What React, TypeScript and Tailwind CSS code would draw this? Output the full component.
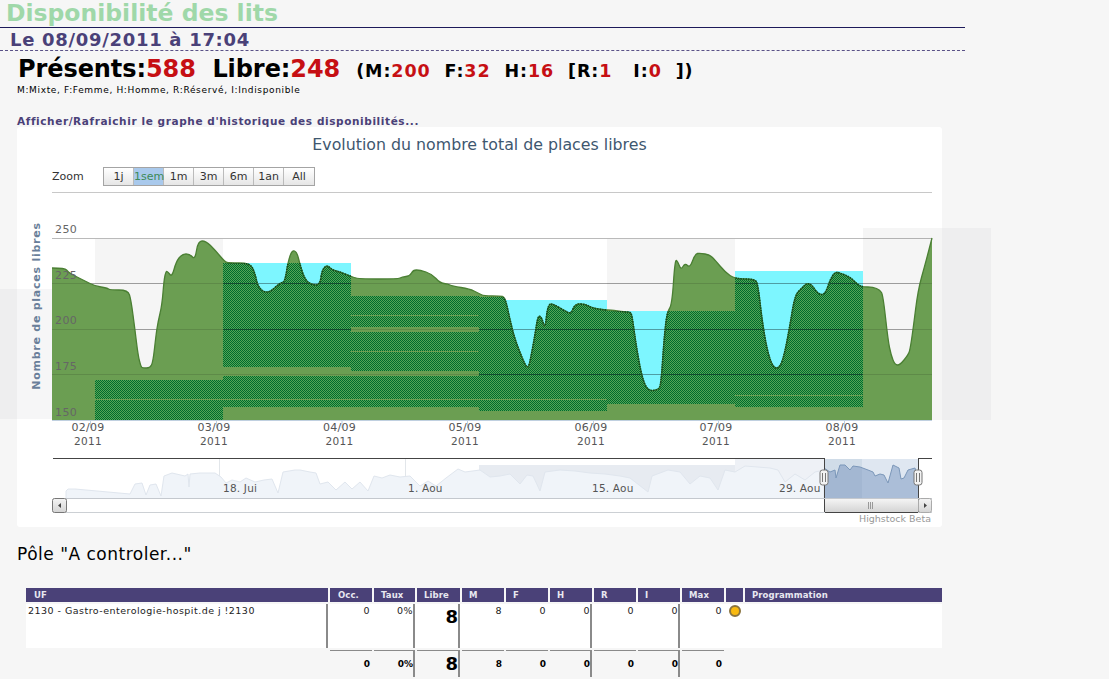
const S: number[][] = [[52,268],[65,268],[68,272],[75,276],[85,281],[95,286],[107,288],[110,290],[128,290],[131,300],[135,330],[138,355],[141,367],[143,368],[150,368],[153,362],[156,335],[158,322],[162,305],[164,280],[166,271],[168,272],[172,277],[176,262],[182,254],[190,254],[195,260],[198,241],[206,241],[215,250],[225,262],[229,263],[250,263],[255,273],[258,288],[268,294],[280,283],[285,282],[288,262],[292,250],[297,252],[300,265],[305,280],[312,285],[320,285],[322,270],[327,265],[332,270],[340,272],[350,276],[358,279],[398,279],[402,277],[410,276],[413,270],[420,270],[432,274],[440,283],[448,284],[452,286],[470,289],[478,293],[484,296],[500,296],[505,297],[510,320],[515,340],[525,365],[528,368],[530,362],[535,335],[538,315],[542,318],[545,330],[548,303],[555,305],[565,311],[571,314],[575,304],[585,304],[592,308],[605,310],[610,310],[625,312],[630,312],[632,315],[636,345],[642,378],[648,391],[658,390],[661,385],[664,340],[667,312],[672,305],[675,259],[678,262],[681,270],[685,263],[690,268],[695,254],[700,253],[710,255],[715,260],[725,272],[735,279],[755,279],[758,285],[762,320],[767,350],[773,368],[780,368],[785,352],[790,325],[795,295],[802,288],[807,283],[812,285],[818,294],[825,295],[830,280],[835,272],[840,273],[850,277],[858,285],[863,287],[873,287],[880,290],[883,295],[888,340],[891,355],[895,365],[900,365],[908,355],[910,350],[913,330],[918,290],[925,265],[932,238]];

const MINI_A: number[][] = [[66,498],[66,491],[68,489],[75,489],[130,494],[135,484],[142,483],[146,495],[150,485],[156,484],[161,496],[164,476],[172,473],[185,476],[188,474],[189,487],[190,474],[200,473],[215,473],[221,477],[226,483],[232,480],[240,482],[246,478],[255,482],[264,480],[272,479],[278,493],[283,472],[295,470],[300,470],[310,472],[316,473],[320,484],[328,482],[336,490],[345,482],[352,489],[360,482],[368,491],[374,476],[382,478],[390,475],[400,477],[410,476],[420,486],[428,481],[436,486],[446,478],[458,469],[465,472],[480,470],[490,477],[500,476],[510,474],[520,484],[527,475],[533,476],[540,491],[545,472],[560,470],[575,471],[590,473],[605,474],[620,476],[630,478],[648,492],[652,476],[668,470],[680,472],[690,484],[700,476],[710,478],[718,490],[725,470],[735,472],[745,466],[770,468],[778,470],[785,482],[795,474],[805,480],[815,472],[824,470],[824,498]];
const MINI_B: number[][] = [[824,468],[830,472],[835,470],[836,478],[840,465],[845,465],[850,470],[853,466],[860,467],[868,470],[873,472],[875,476],[880,474],[884,475],[888,483],[893,465],[899,468],[901,479],[904,478],[908,470],[915,468],[918,480]];

function smooth(p: number[][]) {
  let d = `M${p[0][0]},${p[0][1]}`;
  for (let i = 1; i < p.length - 1; i++) {
    const mx = (p[i][0] + p[i + 1][0]) / 2;
    const my = (p[i][1] + p[i + 1][1]) / 2;
    d += ` Q${p[i][0]},${p[i][1]} ${mx},${my}`;
  }
  d += ` L${p[p.length - 1][0]},${p[p.length - 1][1]}`;
  return d;
}
const poly = (p: number[][]) => "M" + p.map((q) => q.join(",")).join(" L");

const LINE = smooth(S);
const AREA = `${LINE} L932,420 L52,420 Z`;

const DAYS = [
  { x: 95, w: 128, y: 380, h: 40 },
  { x: 223, w: 128, y: 263, h: 104 },
  { x: 223, w: 128, y: 376, h: 31 },
  { x: 351, w: 128, y: 296, h: 31 },
  { x: 351, w: 128, y: 332, h: 39 },
  { x: 351, w: 128, y: 376, h: 31 },
  { x: 479, w: 128, y: 297, h: 114 },
  { x: 607, w: 128, y: 311, h: 93 },
  { x: 735, w: 128, y: 271, h: 136 },
];

const CYAN = [
  { x: 223, w: 128, y: 263, h: 40 },
  { x: 479, w: 128, y: 300, h: 80 },
  { x: 607, w: 128, y: 311, h: 85 },
  { x: 735, w: 128, y: 271, h: 100 },
];

const TICKS = [
  ["02/09", 88],
  ["03/09", 214],
  ["04/09", 339.5],
  ["05/09", 465],
  ["06/09", 591],
  ["07/09", 716],
  ["08/09", 842],
] as const;

const RANGES = ["1j", "1sem", "1m", "3m", "6m", "1an", "All"];
const COLS = ["UF", "Occ.", "Taux", "Libre", "M", "F", "H", "R", "I", "Max", "", "Programmation"];
const ROW = ["2130 - Gastro-enterologie-hospit.de j !2130", "0", "0%", "8", "8", "0", "0", "0", "0", "0"];
const TOTAL = ["", "0", "0%", "8", "8", "0", "0", "0", "0", "0"];
const DIVIDED = [0, 2, 3, 6, 8];
const GRID = "grid grid-cols-[302px_42px_41px_43px_42px_42px_42px_42px_42px_42px_17px_197px] gap-x-[2px]";

function Chart() {
  return (
    <svg viewBox="17 193 925 334" width={925} height={334} className="block overflow-visible" fontFamily="'DejaVu Sans', sans-serif">
      <defs>
        <pattern id="hatch" width="2" height="2" patternUnits="userSpaceOnUse">
          <rect width="2" height="2" fill="#55a555" />
          <rect width="1" height="1" fill="#006a2e" />
          <rect x="1" y="1" width="1" height="1" fill="#006a2e" />
        </pattern>
        <clipPath id="under">
          <path d={AREA} />
        </clipPath>
        <clipPath id="days">
          {DAYS.map((d) => (
            <rect key={`${d.x}-${d.y}`} x={d.x} y={d.y} width={d.w} height={d.h} />
          ))}
        </clipPath>
        <linearGradient id="thumb" x1="0" x2="0" y1="0" y2="1">
          <stop offset="0" stopColor="#f4f4f4" />
          <stop offset="1" stopColor="#d4d4d4" />
        </linearGradient>
      </defs>

      <rect x="0" y="289" width="17" height="130" fill="#eeeeef" />
      <rect x="17" y="289" width="35" height="130" fill="#f6f6f7" />
      <rect x="95" y="239" width="128" height="181" fill="#f5f5f5" />
      <rect x="607" y="239" width="128" height="181" fill="#f5f5f5" />
      <rect x="863" y="228" width="79" height="192" fill="#f5f5f5" />
      <rect x="942" y="228" width="49" height="192" fill="#eeeeef" />

      {CYAN.map((c) => (
        <rect key={c.x} x={c.x} y={c.y} width={c.w} height={c.h} fill="#7df6ff" />
      ))}

      {[238, 283, 329, 374].map((y) => (
        <rect key={y} x="52" y={y} width="880" height="1" fill="#000" fillOpacity="0.27" />
      ))}

      <path d={AREA} fill="#6b9e52" />
      {[283, 329, 374].map((y) => (
        <rect key={y} x="52" y={y} width="880" height="1" fill="#000" fillOpacity="0.12" />
      ))}
      <g clipPath="url(#under)" shapeRendering="crispEdges">
        {DAYS.map((d) => (
          <rect key={`${d.x}-${d.y}`} x={d.x} y={d.y} width={d.w} height={d.h} fill="url(#hatch)" />
        ))}
        <rect x="95" y="399" width="256" height="1" fill="#6b9e52" />
        <rect x="351" y="315" width="128" height="1" fill="#6b9e52" />
        <rect x="351" y="351" width="128" height="1" fill="#6b9e52" />
        <rect x="351" y="399" width="256" height="1" fill="#6b9e52" />
        <rect x="479" y="399" width="128" height="1" fill="#6b9e52" />
        <rect x="735" y="395" width="128" height="1" fill="#6b9e52" />
        <g clipPath="url(#days)">
          {[283, 329, 374].map((y) => (
            <rect key={y} x="52" y={y} width="880" height="1" fill="#0b3a2a" fillOpacity="0.75" />
          ))}
        </g>
      </g>
      <path d={LINE} fill="none" stroke="#4a7f33" strokeWidth="1.3" />
      <g clipPath="url(#days)">
        <path d={LINE} fill="none" stroke="#0a4a20" strokeWidth="1.6" strokeDasharray="1.5 1" />
      </g>

      <rect x="52" y="420" width="880" height="1" fill="#c0d0e0" />

      <g fontSize="11" fill="#666" letterSpacing="0.4">
        {[["250", 233], ["225", 279], ["200", 324], ["175", 370], ["150", 416]].map(([t, y]) => (
          <text key={t} x="55" y={y}>{t}</text>
        ))}
      </g>
      <text transform="translate(40 306) rotate(-90)" textAnchor="middle" fontSize="11" fontWeight="700" fill="#6a7f9a" letterSpacing="0.75">
        Nombre de places libres
      </text>

      {TICKS.map(([t, x]) => (
        <g key={t}>
          <rect x={x + 2} y="420" width="1" height="8" fill="#c0d0e0" />
          <text x={x} y="431" textAnchor="middle" fontSize="11" fill="#555" letterSpacing="0.3">{t}</text>
          <text x={x} y="445" textAnchor="middle" fontSize="10.5" fill="#555" letterSpacing="0.3">2011</text>
        </g>
      ))}

      <rect x="479" y="465" width="256" height="33" fill="#e7ebf1" />
      <rect x="735" y="459" width="89" height="39" fill="#eef1f6" />
      <rect x="824" y="459" width="94" height="39" fill="#dfe7f1" />
      <rect x="219" y="459" width="1" height="39" fill="#e2e6ea" />
      <rect x="405" y="459" width="1" height="39" fill="#e2e6ea" />
      <path d={poly(MINI_A)} fill="#f0f4f9" stroke="#e0e6ee" strokeWidth="1" />
      <path d={`${poly(MINI_B)} L918,498 L824,498 Z`} fill="#abbed8" />
      <rect x="824" y="459" width="38" height="39" fill="#6d8aab" fillOpacity="0.12" />
      <path d={poly(MINI_B)} fill="none" stroke="#7b97b9" strokeWidth="1" />
      <g fontSize="10.5" fill="#555" letterSpacing="0.2">
        <text x="223" y="492">18. Jui</text>
        <text x="408" y="492">1. Aou</text>
        <text x="592" y="492">15. Aou</text>
        <text x="779" y="492">29. Aou</text>
      </g>

      <g shapeRendering="crispEdges">
        <rect x="53" y="458" width="772" height="1" fill="#444" />
        <rect x="918" y="458" width="14" height="1" fill="#444" />
        <rect x="824" y="458" width="1" height="54" fill="#444" />
        <rect x="918" y="458" width="1" height="54" fill="#444" />
        <rect x="66" y="498" width="866" height="1" fill="#c4c8ce" />
        <rect x="66" y="512" width="866" height="1" fill="#ccd0d4" />
      </g>
      <rect x="825" y="499" width="93" height="13" fill="url(#thumb)" />
      <rect x="825" y="512" width="93" height="1" fill="#444" />
      <g fill="#999" shapeRendering="crispEdges">
        <rect x="868" y="502" width="1" height="7" />
        <rect x="870" y="502" width="1" height="7" />
        <rect x="872" y="502" width="1" height="7" />
      </g>
      <rect x="52.5" y="498.5" width="14" height="14" rx="2" fill="url(#thumb)" stroke="#777" />
      <path d="M61,503 L58,505.5 L61,508 Z" fill="#444" />
      <rect x="918.5" y="498.5" width="13" height="14" rx="2" fill="url(#thumb)" stroke="#aaa" />
      <path d="M924,503 L927,505.5 L924,508 Z" fill="#444" />

      {[824, 918].map((x) => (
        <g key={x}>
          <rect x={x - 4} y="470" width="8" height="15" rx="2.5" fill="#f2f2f2" stroke="#777" />
          <path d={`M${x - 1.5},473 V482 M${x + 1.5},473 V482`} stroke="#777" fill="none" />
        </g>
      ))}
      <text x="931" y="522" textAnchor="end" fontSize="9.5" fill="#999">Highstock Beta</text>
    </svg>
  );
}

export default function App() {
  return (
    <div className="h-[679px] w-[1109px] overflow-hidden bg-[#f6f6f6] font-['DejaVu_Sans',sans-serif] text-black">
      <h1 className="h-[28px] w-[965px] border-b border-[#1d1a5a] pl-[6px] text-[23.5px] leading-[27px] font-bold text-[#9fd8a9]">
        Disponibilité des lits
      </h1>
      <div className="h-[23px] w-[965px] border-b border-dashed border-[#5a5288] pl-[10px] text-[18px] leading-[23px] font-bold tracking-[0.7px] text-[#4a4178]">
        Le 08/09/2011 à 17:04
      </div>
      <div className="flex h-[33px] items-baseline pt-[1px] pl-[18px] font-bold whitespace-pre">
        <span className="text-[24px] leading-[34px] tracking-[-0.08px]">Présents:<span className="text-[#c60f13]">588</span>  Libre:<span className="text-[#c60f13]">248</span></span>
        <span className="ml-[16px] text-[17.5px] tracking-[0.9px]">(M:<span className="text-[#c60f13]">200</span>  F:<span className="text-[#c60f13]">32</span>  H:<span className="text-[#c60f13]">16</span>  [R:<span className="text-[#c60f13]">1</span>   I:<span className="text-[#c60f13]">0</span>  ])</span>
      </div>
      <div className="h-[31px] pl-[17px] text-[9px] leading-[12px] tracking-[0.65px]">M:Mixte, F:Femme, H:Homme, R:Réservé, I:Indisponible</div>
      <div className="h-[12px] pl-[17px] text-[10.5px] leading-[13px] font-bold tracking-[0.6px] text-[#4a4178]">
        Afficher/Rafraichir le graphe d'historique des disponibilités...
      </div>

      <div className="ml-[17px] h-[400px] w-[925px] rounded-[3px] bg-white">
        <div className="h-[32px] pt-[7px] text-center text-[15.8px] leading-[22px] text-[#3e576f]">
          Evolution du nombre total de places libres
        </div>
        <div className="ml-[35px] flex h-[34px] w-[880px] items-start border-b border-[#c8c8c8] pt-[8px]">
          <span className="mt-[1px] w-[51px] text-[11px] leading-[18px] text-[#333]">Zoom</span>
          <div className="flex border border-[#a4a4a4]">
            {RANGES.map((r) => (
              <span
                key={r}
                className={
                  r === "1sem"
                    ? "h-[17px] w-[30px] border-r border-[#bbb] bg-[#a9c9ec] text-center text-[11px] leading-[17px] text-[#3d8a58]"
                    : "h-[17px] w-[30px] border-r border-[#bbb] bg-gradient-to-b from-white to-[#e6e6e6] text-center text-[11px] leading-[17px] text-[#333] last:border-r-0"
                }
              >
                {r}
              </span>
            ))}
          </div>
        </div>
        <Chart />
      </div>

      <div className="mt-[17px] h-[44px] pl-[17px] text-[17px] leading-[20px] tracking-[0.5px]">Pôle "A controler..."</div>

      <div className="ml-[26px] w-[916px]">
        <div className={GRID}>
          {COLS.map((c, i) => (
            <div key={i} className={`h-[14px] bg-[#4a4178] text-[8.5px] leading-[14px] font-bold tracking-[0.1px] text-[#e8e8f0] ${i === 0 || i === 1 ? "pl-[8px]" : "pl-[7px]"}`}>
              {c}
            </div>
          ))}
        </div>
        <div className={`${GRID} mt-[2px] h-[44px] bg-white`}>
          {ROW.map((c, i) => (
            <div key={i} className={`${i === 0 ? "pl-[2px] text-left" : DIVIDED.includes(i) ? "text-right" : "pr-[2px] text-right"} ${DIVIDED.includes(i) ? "border-r-2 border-[#8a8a8a]" : ""}`}>
              {i === 3 ? (
                <span className="text-[18px] leading-[26px] font-bold">{c}</span>
              ) : (
                <span className="block text-[9.5px] leading-[14px] tracking-[0.47px] text-[#222]">{c}</span>
              )}
            </div>
          ))}
          <div className="flex justify-center pt-[1px]">
            <span className="size-[12px] rounded-full border-2 border-[#8a7440] bg-[#f8b90f]" />
          </div>
          <div />
        </div>
        <div className={`${GRID} mt-[2px] h-[25px]`}>
          {TOTAL.map((c, i) => (
            <div key={i} className={`text-right font-bold ${DIVIDED.includes(i) ? "" : "pr-[2px]"} ${i > 0 ? "border-t border-[#8a8a8a]" : ""} ${i > 0 && DIVIDED.includes(i) ? "border-r-2 border-r-[#8a8a8a]" : ""}`}>
              {i === 3 ? (
                <span className="text-[18px] leading-[26px]">{c}</span>
              ) : (
                <span className="block pt-[7px] text-[9px] leading-[12px]">{c}</span>
              )}
            </div>
          ))}
        </div>
      </div>
    </div>
  );
}
